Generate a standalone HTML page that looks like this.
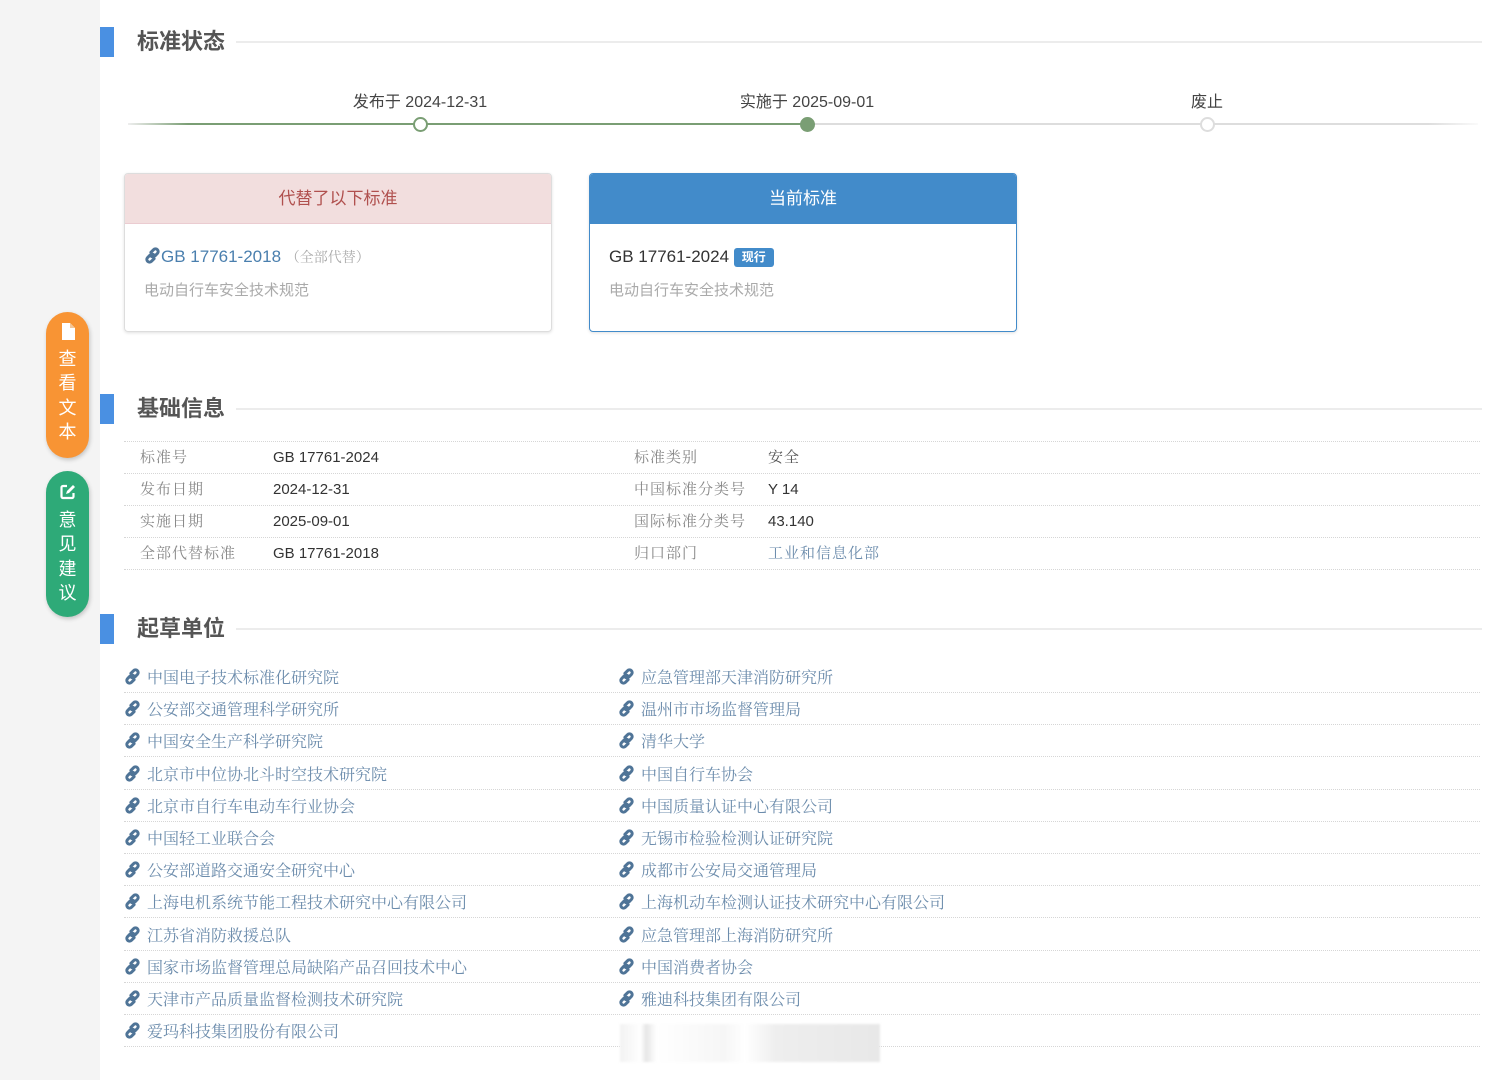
<!DOCTYPE html>
<html><head><meta charset="utf-8">
<style>
*{margin:0;padding:0;box-sizing:border-box}
body{width:1504px;height:1080px;overflow:hidden;background:#fff;font-family:"Liberation Sans","Noto Sans CJK SC",sans-serif;position:relative}
.abs{position:absolute}
.side{left:0;top:0;width:100px;height:1080px;background:#f4f4f4}
.bar{left:100px;width:14px;height:30px;background:#4a90e2}
.h{left:137px;font-size:22px;font-weight:bold;color:#555;line-height:30px}
.hl{height:2px;background:#ececec;right:22px}
.lbl{font-size:16px;color:#444;transform:translateX(-50%);white-space:nowrap}
.card{border:1px solid #ddd;border-radius:4px;box-shadow:0 1px 3px rgba(0,0,0,.12);overflow:hidden}
.ch{height:50px;line-height:50px;text-align:center;font-size:17px}
.dot{border-top:1px dotted #d6d6d6;left:124px;right:24px;height:0}
.k{font-family:"Liberation Serif","Noto Serif CJK SC",serif;font-size:15px;color:#888;letter-spacing:1px;line-height:20px}
.v{font-size:15px;color:#333;line-height:20px}
.u{font-family:"Liberation Serif","Noto Serif CJK SC",serif;font-size:16px;color:#6c8cac;letter-spacing:0;line-height:20px;white-space:nowrap}
.ic{width:17px;height:17px;vertical-align:-2px;margin-right:2px}
.btn{left:46px;width:43px;border-radius:22px;color:#fff;font-size:18px;text-align:center;box-shadow:1px 2px 4px rgba(0,0,0,.2);line-height:24.5px}
</style></head><body>
<svg width="0" height="0" style="position:absolute"><defs><symbol id="lk" viewBox="0 0 16 16"><g fill="none" stroke="#4f7497" stroke-width="2.8" stroke-linecap="round"><path d="M6.5 5 L9 2.5 a2.5 2.5 0 0 1 3.6 3.6 L10.2 8.5 a2.5 2.5 0 0 1 -3.4 0.2"/><path d="M9.5 11 L7 13.5 a2.5 2.5 0 0 1 -3.6 -3.6 L5.8 7.5 a2.5 2.5 0 0 1 3.4 -0.2"/></g></symbol></defs></svg>
<div class="abs side"></div>

<div class="abs btn" style="top:312px;height:146px;background:#f89434;padding-top:10px">
<svg width="14" height="17" viewBox="0 0 14 17"><path d="M1 0h8l5 5v12H1z" fill="#fff"/><path d="M9 0v5h5" fill="#f3c79a"/></svg><br>查<br>看<br>文<br>本</div>
<div class="abs btn" style="top:471px;height:146px;background:#2eaa78;padding-top:12px">
<svg width="18" height="18" viewBox="0 0 18 18"><path d="M8 3H4a1.5 1.5 0 0 0-1.5 1.5v9A1.5 1.5 0 0 0 4 15h9a1.5 1.5 0 0 0 1.5-1.5V10" fill="none" stroke="#fff" stroke-width="2.2"/><path d="M7 11l1-3 6-6 2 2-6 6z" fill="#fff"/></svg><br>意<br>见<br>建<br>议</div>

<div class="abs bar" style="top:27px"></div>
<div class="abs h" style="top:27px">标准状态</div>
<div class="abs hl" style="left:236px;top:41px"></div>
<div class="abs lbl" style="left:420px;top:88px">发布于 2024-12-31</div>
<div class="abs lbl" style="left:807px;top:88px">实施于 2025-09-01</div>
<div class="abs lbl" style="left:1207px;top:88px">废止</div>
<div class="abs" style="left:128px;top:123px;width:680px;height:2px;background:linear-gradient(90deg,#eee,#7a9e74 60px)"></div>
<div class="abs" style="left:808px;top:123px;width:670px;height:2px;background:linear-gradient(90deg,#ddd,#ddd 620px,#fafafa)"></div>
<div class="abs" style="left:413px;top:117px;width:15px;height:15px;border-radius:50%;border:2px solid #7a9e74;background:#fff"></div>
<div class="abs" style="left:800px;top:117px;width:15px;height:15px;border-radius:50%;background:#7a9e74"></div>
<div class="abs" style="left:1200px;top:117px;width:15px;height:15px;border-radius:50%;border:2px solid #ddd;background:#fff"></div>

<div class="abs card" style="left:124px;top:173px;width:428px;height:159px">
<div class="ch" style="background:#f2dede;color:#b0504e;border-bottom:1px solid #ebccd1">代替了以下标准</div>
<div class="abs" style="left:19px;top:73px;font-size:17px;color:#4a7fae;white-space:nowrap"><svg class="ic" style="margin:0"><use href="#lk"/></svg>GB 17761-2018 <span style="font-size:14px;color:#aaa;font-family:'Liberation Serif','Noto Serif CJK SC',serif">（全部代替）</span></div>
<div class="abs" style="left:19px;top:105px;font-size:15px;color:#aaa">电动自行车安全技术规范</div>
</div>
<div class="abs card" style="left:589px;top:173px;width:428px;height:159px;border-color:#428bca">
<div class="ch" style="background:#428bca;color:#fff">当前标准</div>
<div class="abs" style="left:19px;top:73px;font-size:17px;color:#333;white-space:nowrap">GB 17761-2024 <span style="display:inline-block;background:#428bca;color:#fff;font-size:12px;font-weight:bold;padding:0 8px;line-height:19px;border-radius:3px;vertical-align:1px">现行</span></div>
<div class="abs" style="left:19px;top:105px;font-size:15px;color:#aaa">电动自行车安全技术规范</div>
</div>

<div class="abs bar" style="top:394px"></div>
<div class="abs h" style="top:394px">基础信息</div>
<div class="abs hl" style="left:236px;top:408px"></div>
<div class="abs dot" style="top:441px"></div>
<div class="abs dot" style="top:473px"></div>
<div class="abs dot" style="top:505px"></div>
<div class="abs dot" style="top:537px"></div>
<div class="abs dot" style="top:569px"></div>
<div class="abs k" style="left:140px;top:448px">标准号</div><div class="abs v" style="left:273px;top:448px">GB 17761-2024</div>
<div class="abs k" style="left:140px;top:480px">发布日期</div><div class="abs v" style="left:273px;top:480px">2024-12-31</div>
<div class="abs k" style="left:140px;top:512px">实施日期</div><div class="abs v" style="left:273px;top:512px">2025-09-01</div>
<div class="abs k" style="left:140px;top:544px">全部代替标准</div><div class="abs v" style="left:273px;top:544px">GB 17761-2018</div>
<div class="abs k" style="left:634px;top:448px">标准类别</div><div class="abs k" style="left:768px;top:448px;color:#555">安全</div>
<div class="abs k" style="left:634px;top:480px">中国标准分类号</div><div class="abs v" style="left:768px;top:480px">Y 14</div>
<div class="abs k" style="left:634px;top:512px">国际标准分类号</div><div class="abs v" style="left:768px;top:512px">43.140</div>
<div class="abs k" style="left:634px;top:544px">归口部门</div><div class="abs k" style="left:768px;top:544px;color:#6c8cac">工业和信息化部</div>

<div class="abs bar" style="top:614px"></div>
<div class="abs h" style="top:614px">起草单位</div>
<div class="abs hl" style="left:236px;top:628px"></div>

<div class="abs" style="left:0;top:660px;width:1504px">
<div class="abs dot" style="top:32px"></div><div class="abs dot" style="top:64px"></div><div class="abs dot" style="top:96px"></div><div class="abs dot" style="top:129px"></div><div class="abs dot" style="top:161px"></div><div class="abs dot" style="top:193px"></div><div class="abs dot" style="top:225px"></div><div class="abs dot" style="top:257px"></div><div class="abs dot" style="top:290px"></div><div class="abs dot" style="top:322px"></div><div class="abs dot" style="top:354px"></div><div class="abs dot" style="top:386px"></div>
</div>

<div class="abs" style="left:124px;top:668px">
<div class="u" style="height:32.2px"><svg class="ic"><use href="#lk"/></svg> 中国电子技术标准化研究院</div>
<div class="u" style="height:32.2px"><svg class="ic"><use href="#lk"/></svg> 公安部交通管理科学研究所</div>
<div class="u" style="height:32.2px"><svg class="ic"><use href="#lk"/></svg> 中国安全生产科学研究院</div>
<div class="u" style="height:32.2px"><svg class="ic"><use href="#lk"/></svg> 北京市中位协北斗时空技术研究院</div>
<div class="u" style="height:32.2px"><svg class="ic"><use href="#lk"/></svg> 北京市自行车电动车行业协会</div>
<div class="u" style="height:32.2px"><svg class="ic"><use href="#lk"/></svg> 中国轻工业联合会</div>
<div class="u" style="height:32.2px"><svg class="ic"><use href="#lk"/></svg> 公安部道路交通安全研究中心</div>
<div class="u" style="height:32.2px"><svg class="ic"><use href="#lk"/></svg> 上海电机系统节能工程技术研究中心有限公司</div>
<div class="u" style="height:32.2px"><svg class="ic"><use href="#lk"/></svg> 江苏省消防救援总队</div>
<div class="u" style="height:32.2px"><svg class="ic"><use href="#lk"/></svg> 国家市场监督管理总局缺陷产品召回技术中心</div>
<div class="u" style="height:32.2px"><svg class="ic"><use href="#lk"/></svg> 天津市产品质量监督检测技术研究院</div>
<div class="u" style="height:32.2px"><svg class="ic"><use href="#lk"/></svg> 爱玛科技集团股份有限公司</div>
</div>
<div class="abs" style="left:618px;top:668px">
<div class="u" style="height:32.2px"><svg class="ic"><use href="#lk"/></svg> 应急管理部天津消防研究所</div>
<div class="u" style="height:32.2px"><svg class="ic"><use href="#lk"/></svg> 温州市市场监督管理局</div>
<div class="u" style="height:32.2px"><svg class="ic"><use href="#lk"/></svg> 清华大学</div>
<div class="u" style="height:32.2px"><svg class="ic"><use href="#lk"/></svg> 中国自行车协会</div>
<div class="u" style="height:32.2px"><svg class="ic"><use href="#lk"/></svg> 中国质量认证中心有限公司</div>
<div class="u" style="height:32.2px"><svg class="ic"><use href="#lk"/></svg> 无锡市检验检测认证研究院</div>
<div class="u" style="height:32.2px"><svg class="ic"><use href="#lk"/></svg> 成都市公安局交通管理局</div>
<div class="u" style="height:32.2px"><svg class="ic"><use href="#lk"/></svg> 上海机动车检测认证技术研究中心有限公司</div>
<div class="u" style="height:32.2px"><svg class="ic"><use href="#lk"/></svg> 应急管理部上海消防研究所</div>
<div class="u" style="height:32.2px"><svg class="ic"><use href="#lk"/></svg> 中国消费者协会</div>
<div class="u" style="height:32.2px"><svg class="ic"><use href="#lk"/></svg> 雅迪科技集团有限公司</div>
</div>
<div class="abs" style="left:620px;top:1024px;width:260px;height:38px;background:linear-gradient(90deg,#f2f2f2,#fff 8%,#e6e6e6 10%,#fff 14%,#f6f6f6 40%,#fff 48%,#eee 60%,#e8e8e8 100%);filter:blur(1px)"></div>
</body></html>
